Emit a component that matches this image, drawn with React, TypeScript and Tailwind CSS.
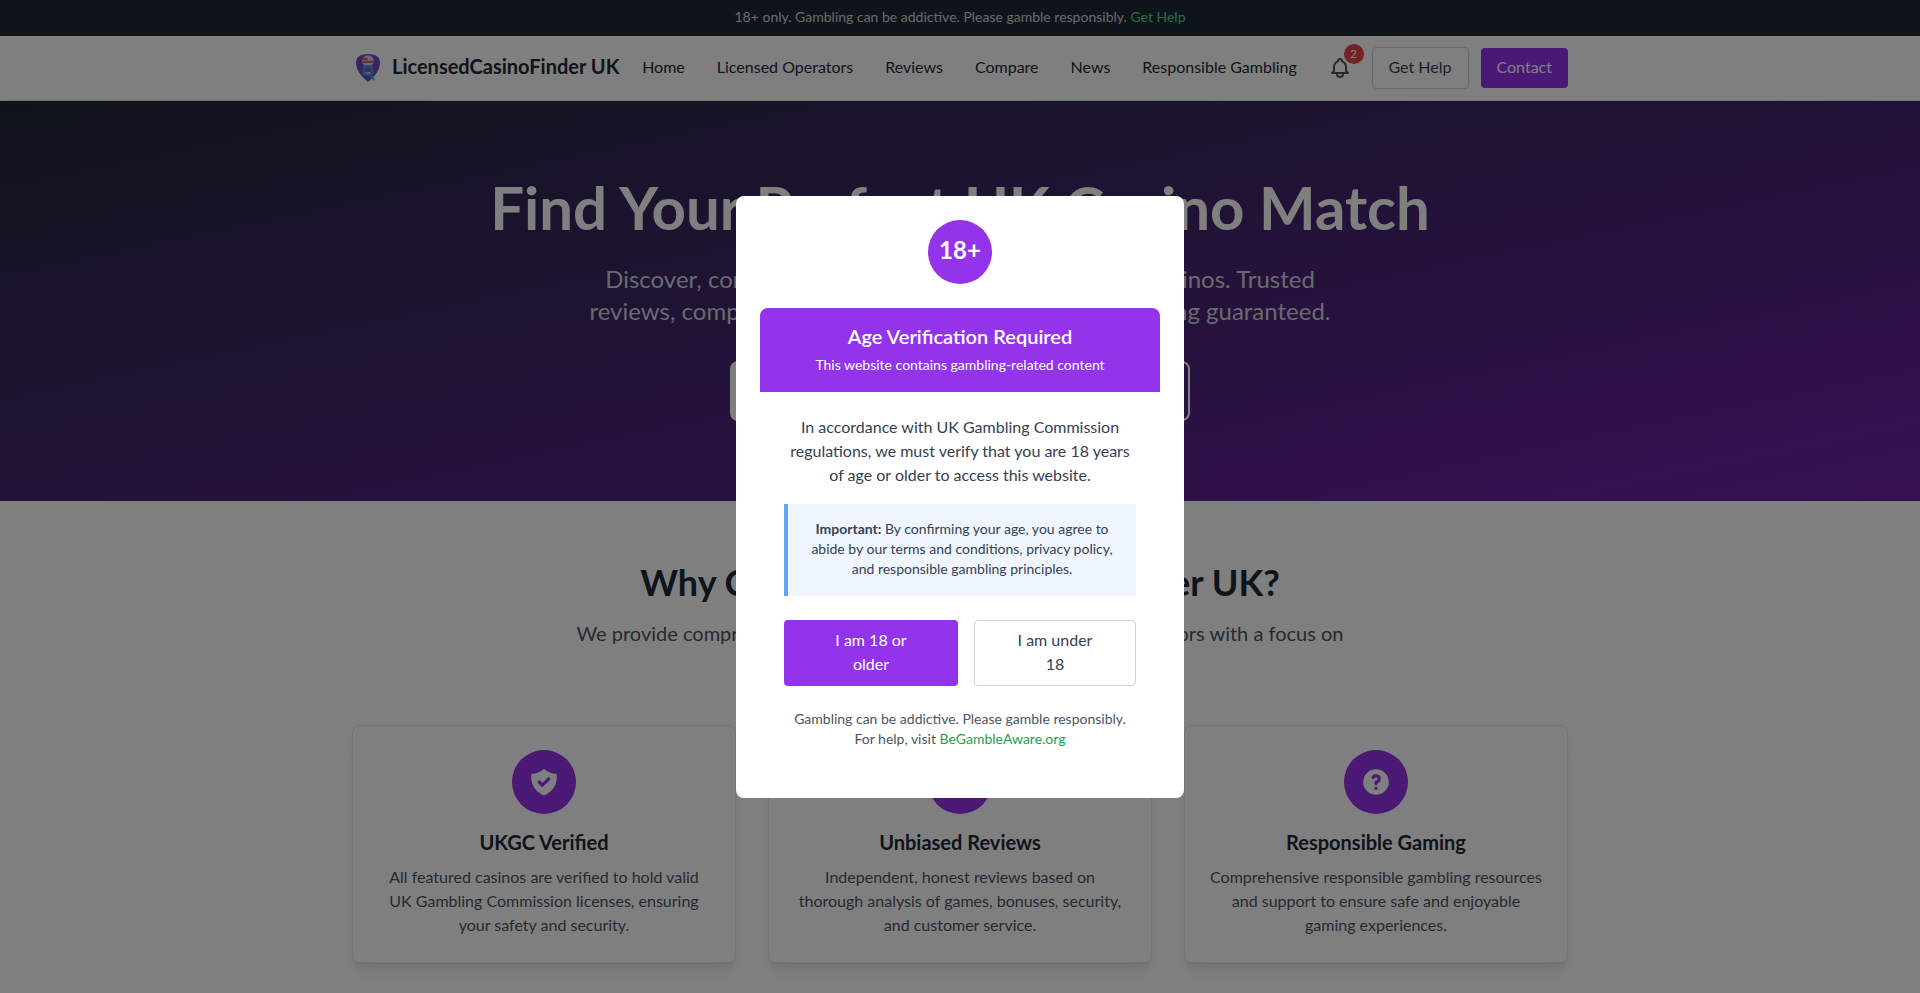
import React from "react";

const navLinks = ["Home", "Licensed Operators", "Reviews", "Compare", "News", "Responsible Gambling"];

const features = [
  {
    title: "UKGC Verified",
    text: "All featured casinos are verified to hold valid UK Gambling Commission licenses, ensuring your safety and security.",
    path: "M2.166 4.999A11.954 11.954 0 0010 1.944 11.954 11.954 0 0017.834 5c.11.65.166 1.32.166 2.001 0 5.225-3.34 9.67-8 11.317C5.34 16.67 2 12.225 2 7c0-.682.057-1.35.166-2.001zm11.541 3.708a1 1 0 00-1.414-1.414L9 10.586 7.707 9.293a1 1 0 00-1.414 1.414l2 2a1 1 0 001.414 0l4-4z",
  },
  {
    title: "Unbiased Reviews",
    text: "Independent, honest reviews based on thorough analysis of games, bonuses, security, and customer service.",
    path: "M10 18a8 8 0 100-16 8 8 0 000 16zm3.707-9.293a1 1 0 00-1.414-1.414L9 10.586 7.707 9.293a1 1 0 00-1.414 1.414l2 2a1 1 0 001.414 0l4-4z",
  },
  {
    title: "Responsible Gaming",
    text: "Comprehensive responsible gambling resources and support to ensure safe and enjoyable gaming experiences.",
    path: "M18 10a8 8 0 11-16 0 8 8 0 0116 0zm-8-3a1 1 0 00-.867.5 1 1 0 11-1.731-1A3 3 0 0113 8a3.001 3.001 0 01-2 2.83V11a1 1 0 11-2 0v-1a1 1 0 011-1 1 1 0 100-2zm0 8a1 1 0 100-2 1 1 0 000 2z",
  },
];

function Logo() {
  return (
    <svg className="size-8" viewBox="0 0 32 32" aria-hidden="true">
      <path d="M16 2C8 2 4 5 4 11c0 7 5 13 12 19 7-6 12-12 12-19 0-6-4-9-12-9z" fill="#6d4fc4" />
      <circle cx="16" cy="9" r="5.8" fill="#d9d4e6" />
      <path d="M10.6 6h5v2h6v3H10.6z" fill="#e0525a" />
      <path d="M10.6 8.2h10.8v1H10.6z" fill="#e8b4bc" />
      <path d="M11.5 14c2.5-1.4 6.500-1.400 9 0l1 7.500c-2 3-9 3-11 0z" fill="#5b8fd0" />
      <circle cx="16" cy="18.500" r="4.600" fill="#6c67c8" stroke="#4f9fd8" strokeWidth="1.300" />
      <path d="M13.500 21h5" stroke="#a9d3ee" strokeWidth="1.800" />
      <path d="M19.500 23.500l2.500 5" stroke="#3cb6da" strokeWidth="2" />
    </svg>
  );
}

function Header() {
  return (
    <header className="border-b border-gray-200 bg-white">
      <div className="mx-auto flex h-16 max-w-7xl items-center justify-between px-8">
        <a href="#" className="flex items-center gap-2 text-xl font-bold text-gray-800">
          <Logo />
          <span className="pb-1">LicensedCasinoFinder UK</span>
        </a>
        <nav className="flex gap-8 pb-0.5 text-gray-800">
          {navLinks.map((label) => (
            <a key={label} href="#">{label}</a>
          ))}
        </nav>
        <div className="flex items-center gap-3">
          <button type="button" aria-label="Notifications" className="relative p-2 text-gray-600">
            <svg className="size-6" fill="none" viewBox="0 0 24 24" stroke="currentColor" strokeWidth="2" strokeLinecap="round" strokeLinejoin="round" aria-hidden="true">
              <path d="M15 17h5l-1.405-1.405A2.032 2.032 0 0118 14.158V11a6.002 6.002 0 00-4-5.659V5a2 2 0 10-4 0v.341C7.67 6.165 6 8.388 6 11v3.159c0 .538-.214 1.055-.595 1.436L4 17h5m6 0v1a3 3 0 11-6 0v-1m6 0H9" />
            </svg>
            <span className="absolute -top-1 -right-1 flex size-5 items-center justify-center rounded-full bg-[#ef4444] text-xs text-white">2</span>
          </button>
          <a href="#" className="rounded border border-gray-300 px-4 pt-[7px] pb-[9px] text-gray-700">Get Help</a>
          <a href="#" className="rounded bg-[#9333ea] px-4 pt-[7px] pb-[9px] text-white">Contact</a>
        </div>
      </div>
    </header>
  );
}

function Hero() {
  return (
    <section className="bg-linear-to-br/srgb from-[#1f2937] to-[#6b21a8] px-8 py-20 text-center">
      <h1 className="mb-[30px] text-6xl leading-[52px] font-bold text-white">Find Your Perfect UK Casino Match</h1>
      <p className="mx-auto mb-[34px] max-w-3xl text-2xl text-gray-300">
        Discover, compare, and select the best UK-licensed casinos. Trusted reviews, comprehensive reports, and responsible gambling guaranteed.
      </p>
      <div className="flex justify-center gap-4">
        <a href="#" className="flex h-15 w-56 items-center justify-center rounded-lg bg-white text-lg text-[#9333ea]">Browse Casinos</a>
        <a href="#" className="flex h-15 w-55 items-center justify-center rounded-lg border-2 border-white text-lg text-white">Compare Now</a>
      </div>
    </section>
  );
}

function Features() {
  return (
    <section className="mx-auto max-w-7xl px-8 py-16 text-center">
      <h2 className="mb-5 text-4xl leading-[34px] font-bold text-gray-800">Why Choose LicensedCasinoFinder UK?</h2>
      <p className="mx-auto mb-[50px] max-w-3xl text-xl text-gray-600">
        We provide comprehensive information about UKGC licensed operators with a focus on player safety and responsible gambling.
      </p>
      <div className="grid grid-cols-3 gap-8">
        {features.map((f) => (
          <article key={f.title} className="rounded-lg border border-gray-200 bg-white px-6 pt-6 pb-[25px] shadow-lg">
            <div className="mx-auto mb-[14px] flex size-16 items-center justify-center rounded-full bg-[#9333ea] text-white">
              <svg className="size-8" viewBox="0 0 20 20" fill="currentColor" aria-hidden="true">
                <path fillRule="evenodd" clipRule="evenodd" d={f.path} />
              </svg>
            </div>
            <h3 className="mb-[9px] text-xl font-bold text-gray-800">{f.title}</h3>
            <p className="text-gray-600">{f.text}</p>
          </article>
        ))}
      </div>
    </section>
  );
}

function AgeDialog() {
  return (
    <div className="fixed inset-0 flex items-center justify-center bg-black/50">
      <div role="dialog" aria-modal="true" aria-labelledby="age-title" className="w-full max-w-md rounded-lg bg-white p-6 text-center">
        <div className="mx-auto mb-6 flex size-16 items-center justify-center rounded-full bg-[#9333ea] pb-1 text-2xl font-bold text-white">18+</div>
        <div className="rounded-t-lg bg-[#9333ea] px-4 pt-[14px] pb-[17px] text-white">
          <h2 id="age-title" className="mb-[5px] text-xl font-semibold">Age Verification Required</h2>
          <p className="text-sm">This website contains gambling-related content</p>
        </div>
        <div className="px-6 pt-[23px] pb-[25px]">
          <p className="mb-[17px] text-gray-700">
            In accordance with UK Gambling Commission regulations, we must verify that you are 18 years of age or older to access this website.
          </p>
          <p className="mb-6 border-l-4 border-[#60a5fa] bg-[#eff6ff] px-4 pt-[15px] pb-[17px] text-sm text-gray-700">
            <strong>Important:</strong> By confirming your age, you agree to abide by our terms and conditions, privacy policy, and responsible gambling principles.
          </p>
          <div className="mb-[23px] grid grid-cols-[174fr_162fr] gap-4">
            <button type="button" className="rounded bg-[#9333ea] px-10 pt-[7px] pb-[9px] text-white">I am 18 or older</button>
            <button type="button" className="rounded border border-gray-300 px-10 pt-[7px] pb-[9px] text-gray-700">I am under 18</button>
          </div>
          <p className="text-sm text-gray-600">
            Gambling can be addictive. Please gamble responsibly. For help, visit{" "}
            <a href="#" className="text-[#16a34a]">BeGambleAware.org</a>
          </p>
        </div>
      </div>
    </div>
  );
}

export default function App() {
  return (
    <div className="h-screen overflow-hidden bg-white font-['Lato',sans-serif]">
      <div className="bg-[#1f2937] px-4 pt-[7px] pb-[9px] text-center text-sm text-gray-300">
        18+ only. Gambling can be addictive. Please gamble responsibly. <a href="#" className="text-[#4ade80]">Get Help</a>
      </div>
      <Header />
      <main>
        <Hero />
        <Features />
      </main>
      <AgeDialog />
    </div>
  );
}
